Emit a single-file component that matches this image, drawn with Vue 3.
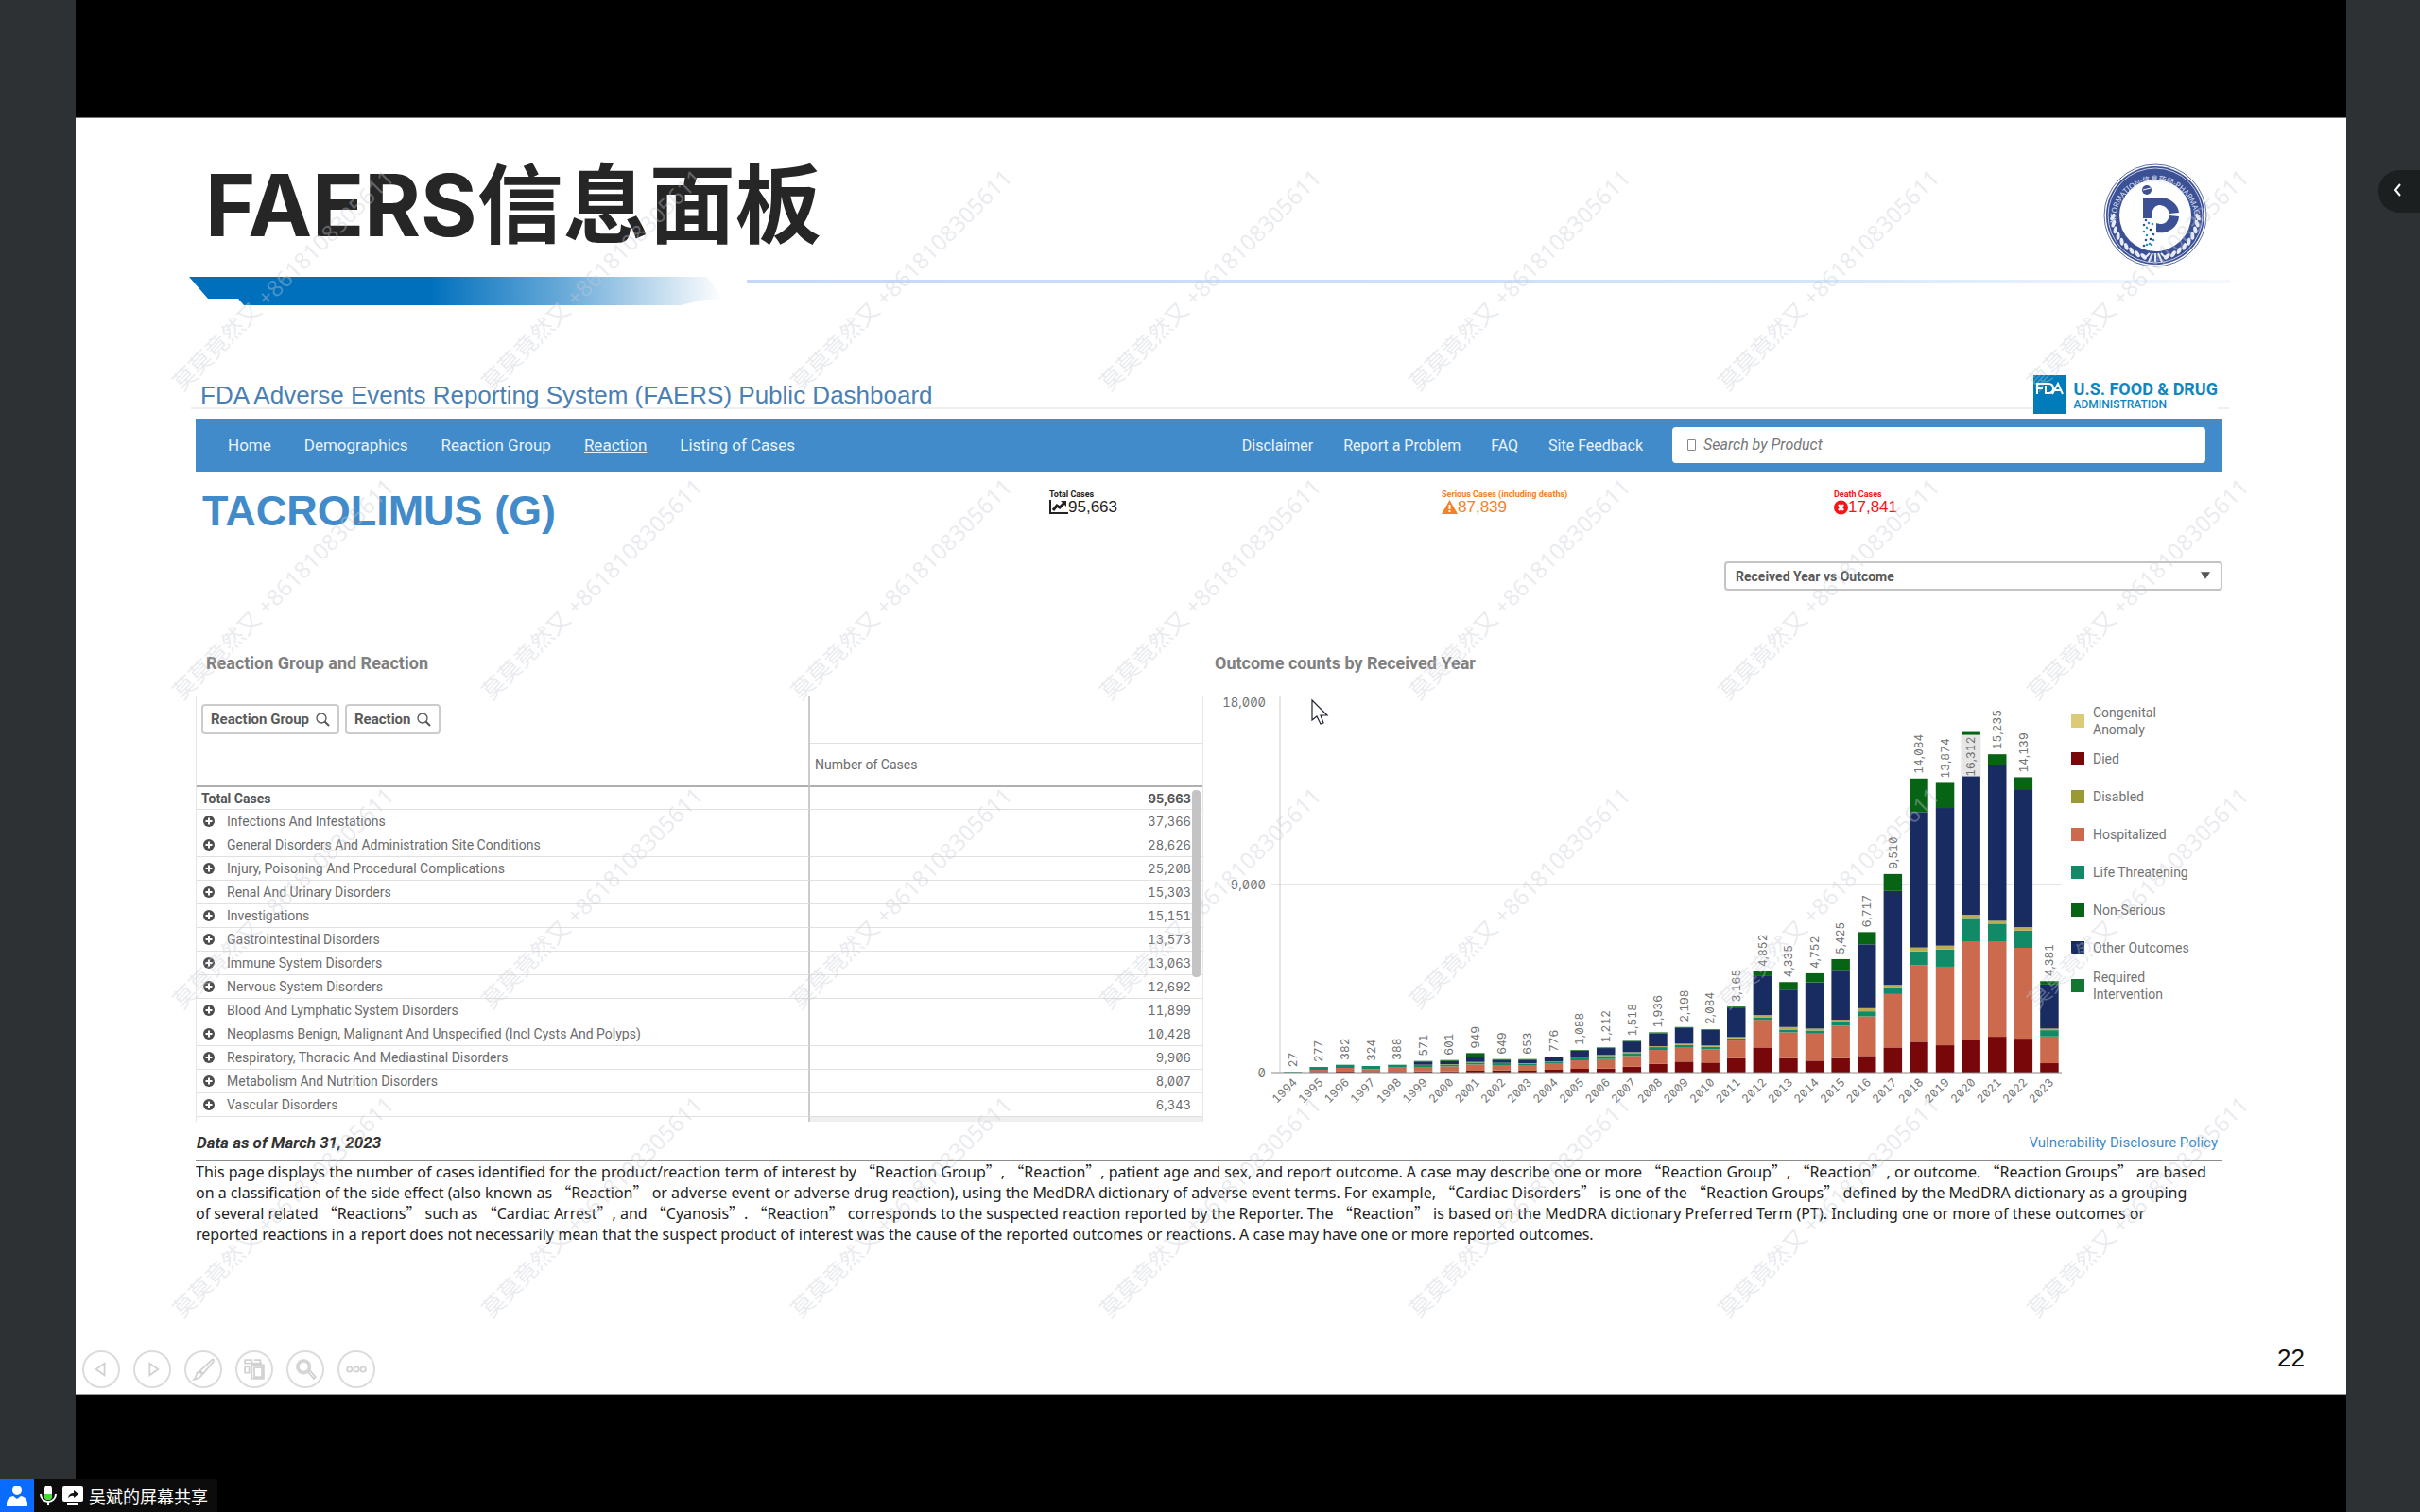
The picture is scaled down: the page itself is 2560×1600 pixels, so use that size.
<script setup>
const navLeft = ['Home', 'Demographics', 'Reaction Group', 'Reaction', 'Listing of Cases']
const navRight = ['Disclaimer', 'Report a Problem', 'FAQ', 'Site Feedback']

const groups = [
  ['Infections And Infestations', '37,366'],
  ['General Disorders And Administration Site Conditions', '28,626'],
  ['Injury, Poisoning And Procedural Complications', '25,208'],
  ['Renal And Urinary Disorders', '15,303'],
  ['Investigations', '15,151'],
  ['Gastrointestinal Disorders', '13,573'],
  ['Immune System Disorders', '13,063'],
  ['Nervous System Disorders', '12,692'],
  ['Blood And Lymphatic System Disorders', '11,899'],
  ['Neoplasms Benign, Malignant And Unspecified (Incl Cysts And Polyps)', '10,428'],
  ['Respiratory, Thoracic And Mediastinal Disorders', '9,906'],
  ['Metabolism And Nutrition Disorders', '8,007'],
  ['Vascular Disorders', '6,343'],
]

const legend = [
  ['Congenital Anomaly', '#dccb76'],
  ['Died', '#780709'],
  ['Disabled', '#999a33'],
  ['Hospitalized', '#cc6a4e'],
  ['Life Threatening', '#128a67'],
  ['Non-Serious', '#076414'],
  ['Other Outcomes', '#182c62'],
  ['Required Intervention', '#127733'],
]

// Stack order from the axis upwards; levels are cumulative, in steps of 15 cases.
const stackColors = ['#780709', '#cc6a4e', '#128a67', '#b9ad50', '#182c62', '#076414']
const years = [
  [1994, '27', [0, 0, 2, 2, 2, 2]],
  [1995, '277', [2, 9, 18, 18, 18, 18]],
  [1996, '382', [3, 15, 25, 25, 25, 25]],
  [1997, '324', [2, 11, 21, 21, 21, 21]],
  [1998, '388', [2, 16, 25, 25, 25, 25]],
  [1999, '571', [4, 18, 24, 25, 35, 37]],
  [2000, '601', [4, 20, 26, 27, 37, 40]],
  [2001, '949', [6, 26, 32, 34, 51, 62]],
  [2002, '649', [7, 24, 30, 31, 40, 43]],
  [2003, '653', [6, 24, 29, 30, 41, 43]],
  [2004, '776', [9, 28, 33, 35, 49, 51]],
  [2005, '1,088', [12, 39, 48, 51, 70, 72]],
  [2006, '1,212', [13, 43, 53, 56, 78, 80]],
  [2007, '1,518', [19, 53, 62, 65, 99, 101]],
  [2008, '1,936', [28, 72, 81, 84, 125, 128]],
  [2009, '2,198', [35, 79, 88, 92, 142, 145]],
  [2010, '2,084', [32, 74, 82, 86, 136, 138]],
  [2011, '3,165', [46, 102, 109, 113, 207, 210]],
  [2012, '4,852', [80, 168, 176, 183, 307, 322]],
  [2013, '4,335', [46, 128, 137, 145, 264, 288]],
  [2014, '4,752', [38, 124, 134, 140, 287, 316]],
  [2015, '5,425', [46, 149, 162, 168, 327, 361]],
  [2016, '6,717', [53, 179, 195, 205, 408, 447]],
  [2017, '9,510', [80, 250, 271, 279, 578, 632]],
  [2018, '14,084', [98, 342, 386, 398, 829, 936]],
  [2019, '13,874', [87, 337, 392, 404, 842, 922]],
  [2020, '16,312', [105, 418, 492, 502, 1050, 1084]],
  [2021, '15,235', [114, 418, 474, 483, 978, 1013]],
  [2022, '14,139', [108, 397, 452, 463, 902, 940]],
  [2023, '4,381', [30, 115, 135, 140, 280, 291]],
]
const base = 399
const slot = 27.6
const bars = years.map(([year, label, levels], i) => {
  const cx = 69 + slot * (i + 0.5)
  const y = (v) => base - (v * 15 * base) / 18000
  const parts = levels
    .map((v, k) => ({ y: y(v), h: y(k ? levels[k - 1] : 0) - y(v), color: stackColors[k] }))
    .filter((p) => p.h > 0)
  return { year, label, cx, top: y(levels[5]), parts, inside: year === 2020 }
})

const noteLines = [
  'This page displays the number of cases identified for the product/reaction term of interest by “Reaction Group”, “Reaction”, patient age and sex, and report outcome. A case may describe one or more “Reaction Group”, “Reaction”, or outcome. “Reaction Groups” are based',
  'on a classification of the side effect (also known as “Reaction” or adverse event or adverse drug reaction), using the MedDRA dictionary of adverse event terms. For example, “Cardiac Disorders” is one of the “Reaction Groups” defined by the MedDRA dictionary as a grouping',
  'of several related “Reactions” such as “Cardiac Arrest”, and “Cyanosis”. “Reaction” corresponds to the suspected reaction reported by the Reporter. The “Reaction” is based on the MedDRA dictionary Preferred Term (PT). Including one or more of these outcomes or',
  'reported reactions in a report does not necessarily mean that the suspect product of interest was the cause of the reported outcomes or reactions. A case may have one or more reported outcomes.',
].map((line) => line.split(/([“”])/))

const marks = []
for (let r = 0; r < 4; r++) for (let c = 0; c < 7; c++) marks.push({ x: 113 + c * 327, y: 290 + r * 327 })

const leaves = []
for (let i = 0; i < 9; i++) {
  for (const side of [-1, 1]) {
    const a = ((90 + side * (16 + i * 9)) * Math.PI) / 180
    leaves.push({ x: Math.cos(a) * 45, y: Math.sin(a) * 45, r: side * (16 + i * 9) + side * 30 })
  }
}
const dots = [
  [-10, 5, '#3c5096'], [-7, 8, '#2a93b8'], [-12, 10, '#3c5096'], [-3, 9, '#2a93b8'], [-9, 13, '#2a93b8'], [-12, 17, '#2a93b8'],
  [-5, 15, '#333d5c'], [-2, 20, '#3c5096'], [-9, 21, '#2a93b8'], [-5, 25, '#333d5c'], [-10, 26, '#3c5096'], [-2, 26, '#2a93b8'],
  [-6, 30, '#2a93b8'], [-12, 32, '#3c5096'], [-9, 31, '#2a93b8'], [-4, 31, '#2a93b8'],
]
</script>

<template>
  <div class="screen">
    <div class="stage">
      <main class="slide">
        <div class="content">
          <header class="slide-head">
            <h1>FAERS信息面板</h1>
            <svg class="emblem" viewBox="-55 -55 110 110" role="img" aria-label="Information Pharmacist">
              <circle r="54" fill="#fff" stroke="#5b6ca8" stroke-width="1" />
              <circle r="52" fill="#3c5096" />
              <circle r="50" fill="none" stroke="#c9d0e6" stroke-width="1" />
              <circle r="38" fill="#fff" />
              <path id="ring" d="M-42 6A42 42 0 1 1 42 6" fill="none" />
              <text font-size="8" fill="#dfe4f2"><textPath href="#ring" startOffset="50%" text-anchor="middle">INFORMATION·信息药师·PHARMACIST</textPath></text>
              <ellipse v-for="(l, i) in leaves" :key="i" rx="4" ry="2" fill="#e8ecf6" :transform="`translate(${l.x} ${l.y}) rotate(${l.r})`" />
              <path d="M0 40V49M-3 40L-7 49M3 40L7 49M-6 40L-12 46M6 40L12 46" stroke="#e8ecf6" stroke-width="2" />
              <circle cx="-9" cy="-27" r="5" fill="#3c5096" />
              <path d="M-13 -27L-5 -29" stroke="#fff" stroke-width="1" />
              <path d="M-13 -19H4A20 18 0 0 1 25 -3L15 -2A11 11 0 0 0 4 -11Q-4 -10 -4 3H-13Z" fill="#3c5096" />
              <path d="M25 1A20 18 0 0 1 1 18V8Q12 12 15 0Z" fill="#3c5096" />
              <circle v-for="(d, i) in dots" :key="'d' + i" :cx="d[0]" :cy="d[1]" r="1.3" :fill="d[2]" />
            </svg>
          </header>
          <div class="ribbon">
            <svg width="566" height="31" viewBox="0 0 566 31" aria-hidden="true">
              <defs>
                <linearGradient id="fade">
                  <stop offset="0.45" stop-color="#0070bd" />
                  <stop offset="0.7" stop-color="#69aad9" />
                  <stop offset="0.9" stop-color="#cfe3f2" />
                  <stop offset="1" stop-color="#fff" />
                </linearGradient>
              </defs>
              <path d="M0 0H548L566 24H545L520 30H58L52 23H20Z" fill="url(#fade)" />
            </svg>
            <div class="ribbon-line"></div>
          </div>

          <section class="dash">
            <div class="dash-head">
              <h2>FDA Adverse Events Reporting System (FAERS) Public Dashboard</h2>
              <div class="fda">
                <svg width="35" height="41" viewBox="0 0 35 41" aria-hidden="true">
                  <rect width="35" height="41" fill="#007cba" />
                  <path d="M4 20V9H11M4 14H10M13 11V19H16Q21 19 21 14Q21 9 16 9H11M20 20L26 9L31 20M23 16H30" fill="none" stroke="#fff" stroke-width="2" />
                </svg>
                <div>
                  <strong>U.S. FOOD &amp; DRUG</strong>
                  <span>ADMINISTRATION</span>
                </div>
              </div>
            </div>

            <nav>
              <div class="nav-left">
                <a v-for="n in navLeft" :key="n" href="#" :class="{ active: n === 'Reaction' }">{{ n }}</a>
              </div>
              <div class="nav-right">
                <a v-for="n in navRight" :key="n" href="#">{{ n }}</a>
              </div>
              <label class="search">
                <i></i>
                <input type="text" placeholder="Search by Product" aria-label="Search by Product" />
              </label>
            </nav>

            <div class="kpis">
              <h3>TACROLIMUS (G)</h3>
              <div class="kpi">
                <b>Total Cases</b>
                <p>
                  <svg width="20" height="16" viewBox="0 0 20 16" aria-hidden="true"><path d="M1 0V14H20" fill="none" stroke="currentColor" stroke-width="2" /><path d="M4 11L8 6L11 8L16 3" fill="none" stroke="currentColor" stroke-width="3" /><path d="M12 1H18V7Z" fill="currentColor" /></svg>95,663
                </p>
              </div>
              <div class="kpi serious">
                <b>Serious Cases (including deaths)</b>
                <p>
                  <svg width="17" height="16" viewBox="0 0 17 16" aria-hidden="true"><path d="M8.500 0L17 15H0Z" fill="currentColor" /><path d="M8.500 5V10M8.500 11V13" stroke="#fff" stroke-width="2" /></svg>87,839
                </p>
              </div>
              <div class="kpi death">
                <b>Death Cases</b>
                <p>
                  <svg width="15" height="16" viewBox="0 0 15 16" aria-hidden="true"><circle cx="7.500" cy="8" r="7.500" fill="currentColor" /><path d="M5 5L10 11M10 5L5 11" stroke="#fff" stroke-width="2.500" /></svg>17,841
                </p>
              </div>
            </div>

            <div class="picker">
              <select aria-label="Chart view"><option>Received Year vs Outcome</option></select>
              <svg width="10" height="8" viewBox="0 0 12 9" aria-hidden="true"><path d="M0 0H12L6 9Z" fill="#555" /></svg>
            </div>

            <div class="panels">
              <section>
                <h4 class="indent">Reaction Group and Reaction</h4>
                <div class="grid-wrap">
                  <table>
                    <colgroup><col class="c1" /><col /></colgroup>
                    <thead>
                      <tr class="h1">
                        <th rowspan="2" class="fields">
                          <div>
                            <button v-for="f in ['Reaction Group', 'Reaction']" :key="f" type="button">
                              {{ f }}
                              <svg width="15" height="15" viewBox="0 0 15 15" aria-hidden="true"><circle cx="6" cy="6" r="5" fill="none" stroke="#555" stroke-width="1.300" /><path d="M9.500 9.500L14 14" stroke="#555" stroke-width="2" /></svg>
                            </button>
                          </div>
                        </th>
                        <th class="blank"></th>
                      </tr>
                      <tr class="h2"><th class="measure">Number of Cases</th></tr>
                    </thead>
                    <tbody>
                      <tr class="total"><td>Total Cases</td><td class="num">95,663</td></tr>
                      <tr v-for="g in groups" :key="g[0]">
                        <td>
                          <svg width="12" height="12" viewBox="0 0 12 12" aria-hidden="true"><circle cx="6" cy="6" r="6" fill="#4d4d4d" /><path d="M6 2.500V9.500M2.500 6H9.500" stroke="#fff" stroke-width="2" /></svg>{{ g[0] }}
                        </td>
                        <td class="num">{{ g[1] }}</td>
                      </tr>
                    </tbody>
                  </table>
                  <div class="thumb"></div>
                </div>
              </section>

              <section>
                <h4>Outcome counts by Received Year</h4>
                <div class="chart">
                  <svg class="plot" viewBox="0 0 900 451" role="img" aria-label="Outcome counts by received year">
                    <g stroke="#ccc" stroke-width="1">
                      <path d="M60 0.500H896M60 200H896M69 0V399" fill="none" />
                    </g>
                    <g class="axis" text-anchor="end">
                      <text x="54" y="12">18,000</text>
                      <text x="54" y="205">9,000</text>
                      <text x="54" y="404">0</text>
                    </g>
                    <g v-for="b in bars" :key="b.year">
                      <rect v-for="(p, i) in b.parts" :key="i" :x="b.cx - 10" :y="p.y" width="19.500" :height="p.h" :fill="p.color" />
                      <rect v-if="b.inside" :x="b.cx - 11" :y="b.top + 3" width="21" height="44" fill="#e6e6e6" />
                      <text class="val" :text-anchor="b.inside ? 'end' : 'start'" :transform="`translate(${b.cx + 4} ${b.inside ? b.top + 5 : b.top - 5}) rotate(-90)`">{{ b.label }}</text>
                      <text class="val" text-anchor="end" :transform="`translate(${b.cx + 5} 410) rotate(-45)`">{{ b.year }}</text>
                    </g>
                    <path d="M60 399H896" stroke="#888" />
                    <path d="M103 5V26L108 22L112 30L115 29L112 21H119Z" fill="#fff" stroke="#223" stroke-width="1.200" />
                  </svg>
                  <ul>
                    <li v-for="l in legend" :key="l[0]"><i :style="{ background: l[1] }"></i><span>{{ l[0] }}</span></li>
                  </ul>
                </div>
              </section>
            </div>

            <div class="meta">
              <em>Data as of March 31, 2023</em>
              <a href="#">Vulnerability Disclosure Policy</a>
            </div>
            <p class="note">
              <span v-for="(line, i) in noteLines" :key="i" class="line"><template v-for="(t, k) in line" :key="k"><span v-if="k % 2" class="wide">{{ t }}</span><template v-else>{{ t }}</template></template></span>
            </p>
          </section>
        </div>

        <footer>
          <div class="tools">
            <button type="button" aria-label="Previous"><svg viewBox="0 0 40 40"><path d="M24 13V27L14 20Z" /></svg></button>
            <button type="button" aria-label="Next"><svg viewBox="0 0 40 40"><path d="M17 13V27L27 20Z" /></svg></button>
            <button type="button" aria-label="Pen"><svg viewBox="0 0 40 40"><path d="M30 9Q33 7 32 11L20 25L16 22ZM15 23L19 26Q16 31 9 32Q12 29 12 26Q13 23 15 23" /></svg></button>
            <button type="button" aria-label="All slides"><svg viewBox="0 0 40 40"><path d="M9 9H17V13H9ZM20 9H27V13M9 17H14V24H9ZM17 15H31V31H17ZM20 18H29V29H20ZM14 13H28V15" /></svg></button>
            <button type="button" aria-label="Zoom"><svg viewBox="0 0 40 40"><circle cx="18" cy="17" r="8" /><circle cx="18" cy="17" r="6" /><path d="M23 23L30 31L32 29L25 21" /></svg></button>
            <button type="button" aria-label="More"><svg viewBox="0 0 40 40"><circle cx="12" cy="20" r="3" /><circle cx="20" cy="20" r="3" /><circle cx="28" cy="20" r="3" /></svg></button>
          </div>
          <span class="page">22</span>
        </footer>

        <svg class="marks" aria-hidden="true">
          <text v-for="(m, i) in marks" :key="i" :transform="`translate(${m.x} ${m.y}) rotate(-45)`">莫莫竟然又 +8618108305611</text>
        </svg>
      </main>
    </div>

    <button class="drawer" type="button" aria-label="Expand panel">
      <svg width="8" height="14" viewBox="0 0 8 14"><path d="M7 1L2 7L7 13" fill="none" stroke="#fff" stroke-width="2" /></svg>
    </button>

    <div class="status">
      <span class="user">
        <svg width="22" height="22" viewBox="0 0 22 22" aria-hidden="true"><circle cx="11" cy="5" r="5" fill="#fff" /><path d="M0 22V18Q1 12 7 11L11 14L15 11Q21 12 22 18V22Z" fill="#fff" /></svg>
      </span>
      <svg width="18" height="22" viewBox="0 0 18 22" aria-hidden="true"><rect x="5" width="8" height="15" rx="4" fill="#fff" /><path d="M5 9H13V11A4 4 0 0 1 5 11Z" fill="#3de02c" /><path d="M1 9A8 8 0 0 0 17 9M9 17V21" fill="none" stroke="#fff" stroke-width="2" /></svg>
      <svg width="22" height="20" viewBox="0 0 22 20" aria-hidden="true"><rect width="22" height="16" rx="2" fill="#fff" /><path d="M5 18H17V20H5Z" fill="#fff" /><path d="M6 12Q7 7 12 7V4L17 8L12 12V10Q9 9 6 12Z" fill="#111" /></svg>
      <span>吴斌的屏幕共享</span>
    </div>
  </div>
</template>

<style>
body {
  margin: 0;
  background: #2d3133;
}
</style>

<style scoped>
* {
  box-sizing: border-box;
}
h1, h2, h3, h4, p, ul {
  margin: 0;
  padding: 0;
}
a {
  color: inherit;
  text-decoration: none;
}
button {
  font-family: inherit;
  padding: 0;
}
.screen {
  position: relative;
  min-height: 100vh;
  padding: 0 78px 0 80px;
  display: flex;
  background: #2d3133;
  font-family: Roboto, "Noto Sans CJK SC", sans-serif;
}
.stage {
  flex: 1;
  min-width: 0;
  padding-top: 124px;
  background: #000;
  display: flex;
  flex-direction: column;
}
.slide {
  position: relative;
  background: #fff;
  border-top: 1px solid #777;
  border-bottom: 1px solid #999;
}
.content {
  padding: 43px 131px 0 127px;
}
.slide-head {
  display: flex;
  justify-content: space-between;
  height: 125px;
  padding: 0 16px 0 10px;
}
h1 {
  font: bold 91px/98px Inter, "Noto Sans CJK SC", sans-serif;
  color: #262626;
}
.emblem {
  width: 110px;
  height: 110px;
  margin-top: 5px;
}
.emblem text {
  font-family: "Noto Sans", "Noto Sans CJK SC", sans-serif;
}
.ribbon {
  display: flex;
  gap: 24px;
  margin: 0 -9px 0 -7px;
}
.ribbon-line {
  flex: 1;
  height: 4px;
  margin-top: 3px;
  background: linear-gradient(90deg, #c6d8f8, #d2e4f8 70%, #f4f9fe);
}
.dash {
  margin-top: 73px;
}
.dash-head {
  position: relative;
  display: flex;
  justify-content: space-between;
  align-items: flex-start;
  height: 46px;
  padding: 0 5px;
}
.dash-head::before {
  content: "";
  position: absolute;
  left: -5px;
  right: -7px;
  bottom: 10px;
  border-top: 2px solid #efefef;
}
h2 {
  position: relative;
  font: 26px/42px "Liberation Sans", Arial, sans-serif;
  color: #4a7fb5;
}
.fda {
  position: relative;
  display: flex;
  gap: 8px;
  background: #fff;
  color: #0f86bf;
}
.fda div {
  display: flex;
  flex-direction: column;
  padding-top: 6px;
}
.fda strong {
  font-size: 18px;
  line-height: 18px;
}
.fda span {
  font-size: 12px;
  line-height: 14px;
  font-weight: 500;
}
nav {
  display: flex;
  align-items: center;
  height: 56px;
  padding: 0 18px 0 34px;
  background: #428bca;
  color: #e9f3fb;
}
.nav-left {
  display: flex;
  gap: 35px;
  font-size: 17px;
}
.nav-right {
  display: flex;
  gap: 32px;
  margin-left: auto;
  font-size: 16px;
}
.active {
  text-decoration: underline;
}
.search {
  display: flex;
  align-items: center;
  gap: 8px;
  width: 564px;
  height: 38px;
  margin-left: 31px;
  padding: 0 16px;
  background: #fff;
  border-radius: 4px;
}
.search i {
  width: 9px;
  height: 12px;
  border: 1px solid #888;
  border-radius: 1px;
}
.search input {
  flex: 1;
  border: 0;
  padding: 0;
  outline: 0;
  font: italic 16px/20px Roboto, sans-serif;
}
.search input::placeholder {
  color: #777;
}
.kpis {
  display: grid;
  grid-template-columns: 903fr 415fr 415fr 411fr;
  align-items: start;
  height: 95px;
  padding-top: 18px;
}
h3 {
  padding-left: 7px;
  font: bold 45px/48px "Liberation Sans", Arial, sans-serif;
  color: #428bca;
}
.kpi b {
  display: block;
  font-size: 9px;
  line-height: 12px;
}
.kpi p {
  display: flex;
  align-items: center;
  font: 17px/16px "Liberation Sans", Arial, sans-serif;
}
.kpi {
  color: #222;
}
.serious {
  color: #f58025;
}
.death {
  color: #f81414;
}
.picker {
  position: relative;
  width: 527px;
  margin-left: auto;
}
.picker select {
  display: block;
  width: 100%;
  height: 31px;
  padding: 0 10px;
  appearance: none;
  background: #fff;
  border: 2px solid #c4c4c4;
  border-radius: 4px;
  font: bold 14px/20px Roboto, sans-serif;
  color: #595959;
}
.picker svg {
  position: absolute;
  right: 13px;
  top: 11px;
}
.panels {
  display: grid;
  grid-template-columns: 1fr 1fr;
  gap: 12px;
  margin-top: 65px;
}
h4 {
  margin-bottom: 22px;
  font-size: 18px;
  line-height: 24px;
  color: #808080;
}
.indent {
  padding-left: 11px;
}
.grid-wrap {
  position: relative;
  height: 451px;
  border: solid #e6e6e6;
  border-width: 1px 1px 0;
}
.grid-wrap::after {
  content: "";
  position: absolute;
  right: 0;
  bottom: 0;
  width: 39%;
  height: 5px;
  background: #efefef;
  border-left: 2px solid #ccc;
}
table {
  width: 100%;
  table-layout: fixed;
  border-spacing: 0;
  font-size: 14px;
  color: #6b6b6b;
}
.c1 {
  width: 61%;
}
th, td {
  padding: 0;
  text-align: left;
  font-weight: normal;
  border-bottom: 1px solid #e0e0e0;
}
td:first-child, .fields {
  border-right: 2px solid #ccc;
}
.h1 {
  height: 50px;
}
.h2 {
  height: 46px;
}
.fields {
  vertical-align: top;
  border-bottom: 2px solid #b0b0b0;
}
.fields div {
  display: flex;
  gap: 6px;
  padding: 8px 5px;
}
.fields button {
  display: flex;
  align-items: center;
  gap: 7px;
  height: 32px;
  padding: 0 8px;
  background: #fff;
  border: 2px solid #ccc;
  border-radius: 4px;
  font-size: 15px;
  font-weight: bold;
  color: #595959;
}
.measure {
  padding-left: 5px;
  border-bottom: 2px solid #b0b0b0;
}
td {
  height: 25px;
  line-height: 20px;
  white-space: nowrap;
}
td svg {
  margin: 0 13px 0 7px;
  vertical-align: -1px;
}
.total td {
  height: 24px;
  font-weight: bold;
  color: #555;
}
.total td:first-child {
  padding-left: 5px;
}
td.num {
  padding-right: 12px;
  text-align: right;
  font-family: Inter, sans-serif;
  font-size: 13px;
  font-feature-settings: "tnum", "zero";
}
.thumb {
  position: absolute;
  right: 2px;
  top: 99px;
  width: 9px;
  height: 198px;
  border-radius: 4px;
  background: #c4c4c4;
}
.chart {
  display: flex;
}
.plot {
  flex: 1;
  min-width: 0;
  overflow: visible;
}
.axis, .val {
  font-family: Inter, sans-serif;
  font-feature-settings: "tnum", "zero";
  font-size: 13px;
  fill: #737373;
}
.val {
  font-size: 12px;
}
ul {
  width: 166px;
  padding: 7px 0 0 6px;
  list-style: none;
}
li {
  display: flex;
  align-items: center;
  gap: 9px;
  height: 40px;
  padding-right: 60px;
  font-size: 14px;
  line-height: 18px;
  color: #737373;
}
li i {
  flex: none;
  width: 14px;
  height: 14px;
}
li:nth-child(n + 5) {
  white-space: nowrap;
}
li:last-child {
  white-space: normal;
}
.meta {
  display: flex;
  justify-content: space-between;
  align-items: center;
  height: 42px;
  padding: 3px 5px 0 1px;
  border-bottom: 2px solid #8c8c8c;
}
.meta em {
  font-size: 17px;
  font-weight: bold;
  color: #333;
}
.meta a {
  font-size: 15px;
  color: #428bca;
}
.note {
  font: 16px/22px "Noto Sans", sans-serif;
  color: #222;
}
.line {
  display: block;
  white-space: nowrap;
}
.wide {
  font-family: "Noto Sans CJK SC", sans-serif;
  line-height: 16px;
}
footer {
  display: flex;
  justify-content: space-between;
  align-items: flex-start;
  margin-top: 112px;
  padding: 0 44px 6px 7px;
}
.tools {
  display: flex;
  gap: 14px;
}
.tools button {
  width: 40px;
  height: 40px;
  border: 2px solid #dcdcdc;
  border-radius: 50%;
  background: #fff;
}
.tools svg {
  display: block;
  fill: none;
  stroke: #d2d2d2;
  stroke-width: 2;
}
.page {
  font: 26px/16px "Liberation Sans", Arial, sans-serif;
  color: #111;
}
.marks {
  position: absolute;
  inset: 0;
  width: 100%;
  height: 100%;
  pointer-events: none;
}
.marks text {
  font: 24px "Noto Sans", "Noto Sans CJK SC", sans-serif;
  fill: rgba(198, 203, 214, 0.38);
}
.drawer {
  position: absolute;
  right: 0;
  top: 180px;
  width: 44px;
  height: 45px;
  padding-right: 4px;
  border: 0;
  border-radius: 22px 0 0 22px;
  background: #1c1f20;
}
.status {
  position: absolute;
  left: 0;
  bottom: 0;
  display: flex;
  align-items: center;
  gap: 6px;
  height: 35px;
  padding-right: 10px;
  background: #0c0c0c;
  color: #fff;
  font: 18px/24px "Noto Sans CJK SC", sans-serif;
}
.user {
  display: flex;
  align-items: center;
  justify-content: center;
  width: 36px;
  height: 35px;
  background: #0a6cff;
}
</style>
